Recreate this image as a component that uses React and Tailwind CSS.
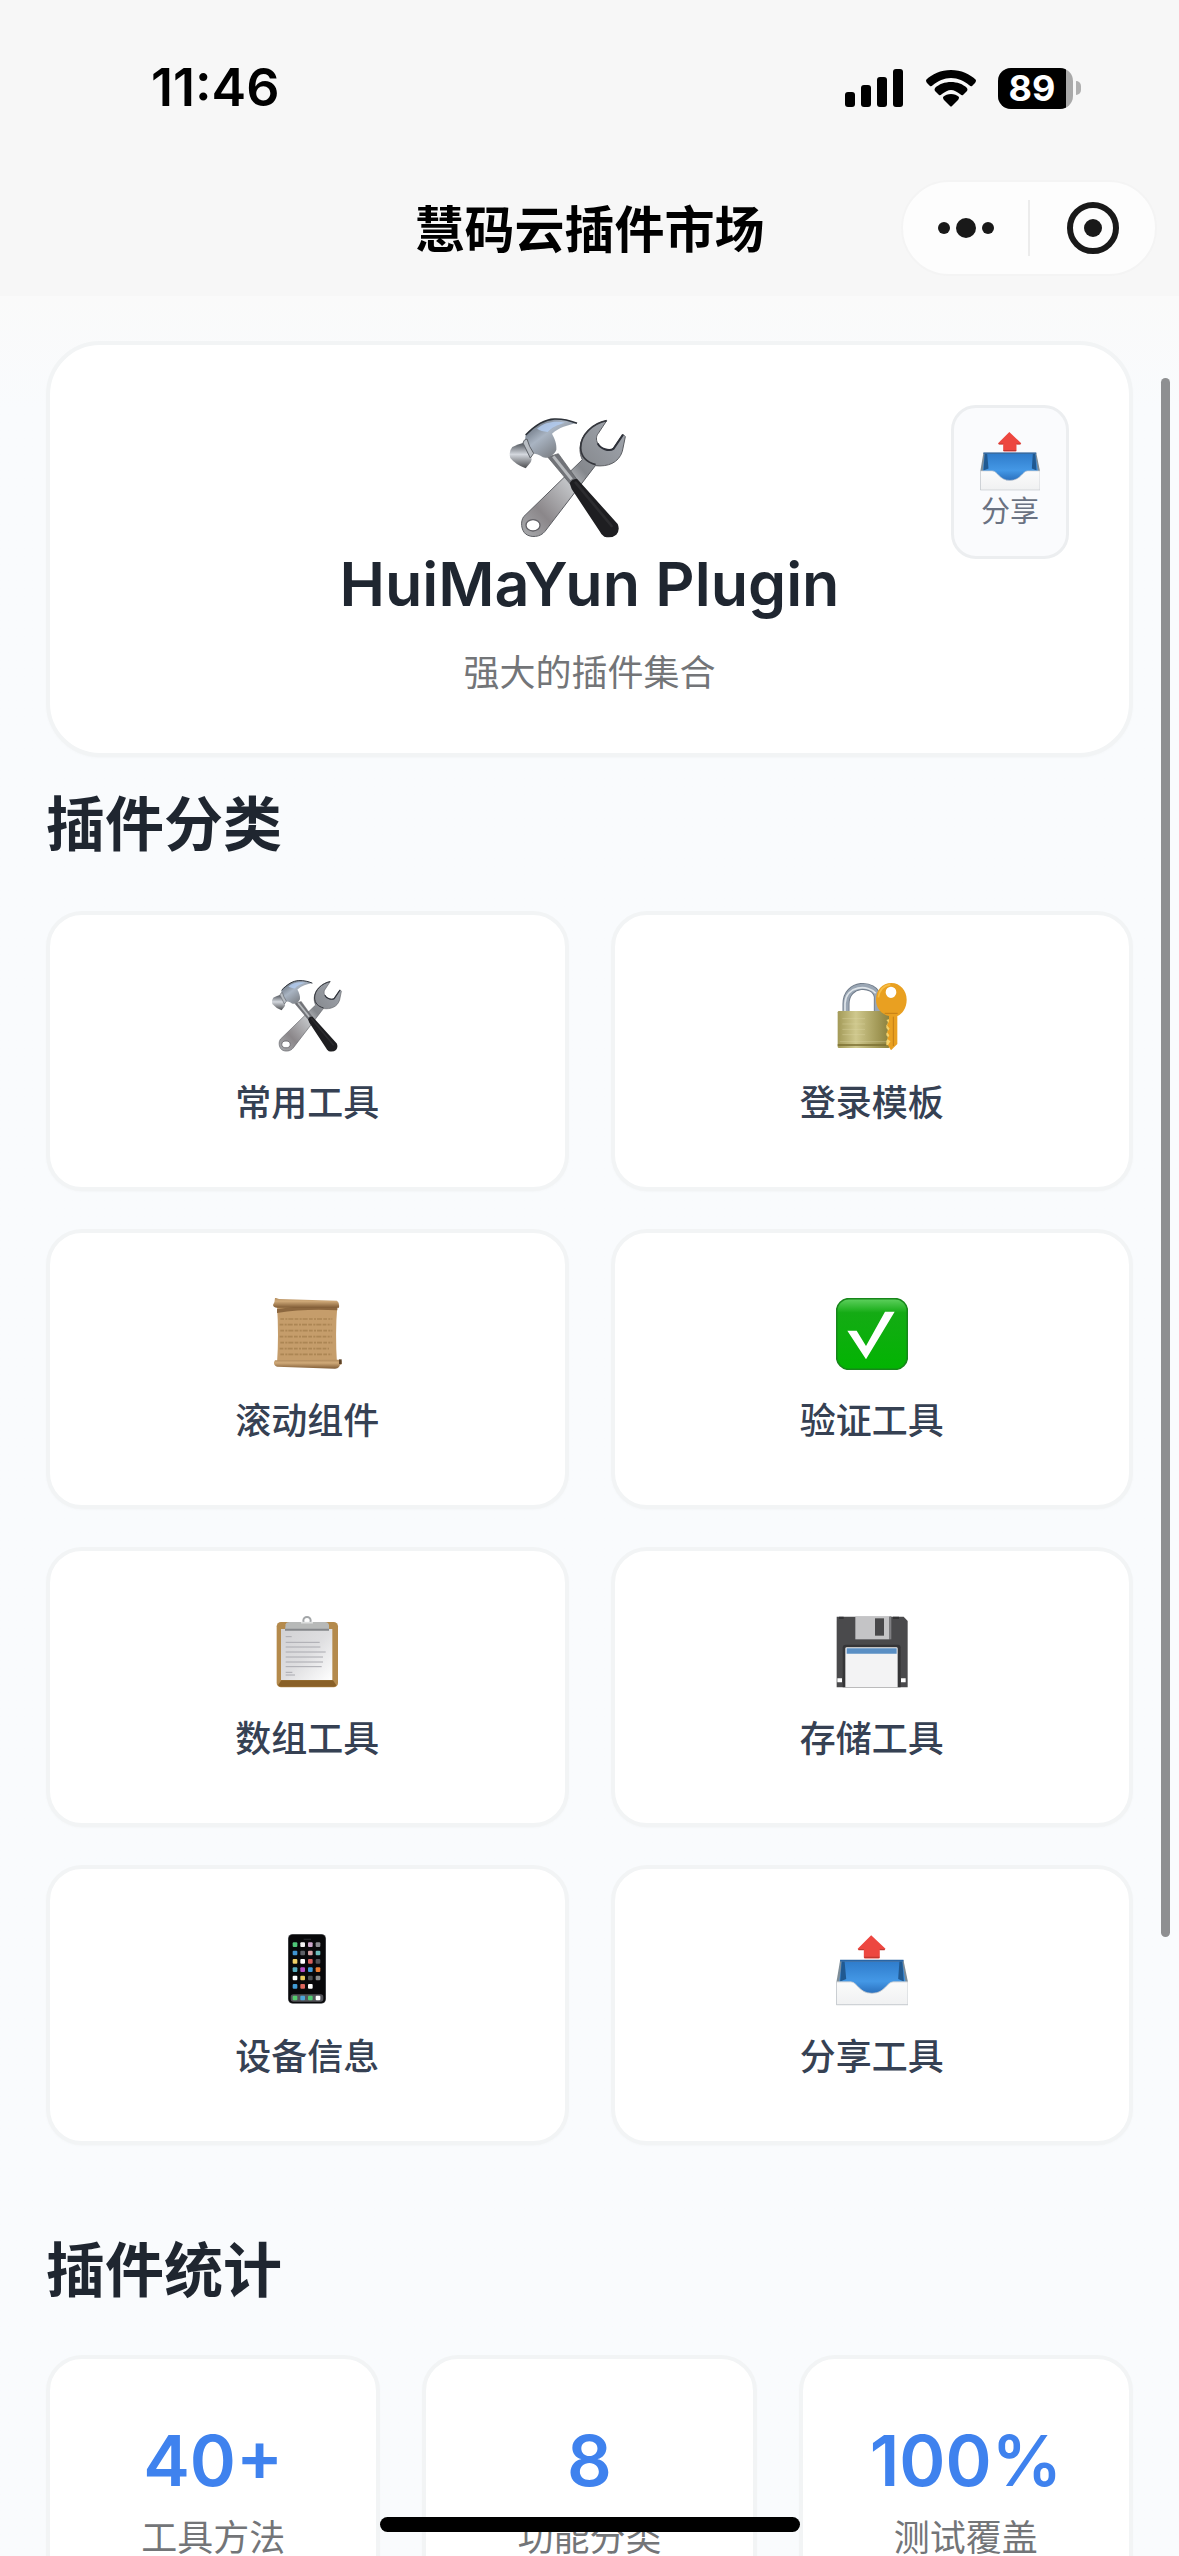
import React, { useId } from "react";

function ToolsIcon({ className }) {
  const id = useId();
  return (
    <svg viewBox="88 80 354 360" className={className} aria-hidden="true">
      <defs>
        <linearGradient id={id + "w"} x1="1" y1="0" x2="0" y2="1">
          <stop offset="0" stopColor="#a3a8b0" />
          <stop offset="0.42" stopColor="#85888d" />
          <stop offset="0.55" stopColor="#c0c2c5" />
          <stop offset="0.8" stopColor="#8b878a" />
          <stop offset="1" stopColor="#a9abae" />
        </linearGradient>
        <linearGradient id={id + "h"} x1="0" y1="0" x2="1" y2="1">
          <stop offset="0" stopColor="#4d5560" />
          <stop offset="0.4" stopColor="#a9b4c2" />
          <stop offset="0.75" stopColor="#7d8187" />
          <stop offset="1" stopColor="#4c4d50" />
        </linearGradient>
        <linearGradient id={id + "f"} x1="0" y1="0" x2="0" y2="1">
          <stop offset="0" stopColor="#4f545b" />
          <stop offset="0.45" stopColor="#d4d8de" />
          <stop offset="1" stopColor="#4a4b4e" />
        </linearGradient>
      </defs>
      <path d="M381 88C340 96 304 128 301 168C300 184 304 197 308 205L132 376C122 390 124 416 138 428C154 440 182 438 196 420L347 223C384 227 417 215 428 180L437 136L430 129L400 172C388 182 362 172 354 156C348 144 350 133 356 126Z" fill={"url(#" + id + "w)"} stroke="#5b5d62" strokeWidth="3" />
      <path d="M381 88C340 96 302 130 303 170C304 196 320 212 348 220" fill="none" stroke="#34363c" strokeWidth="5" />
      <path d="M430 130L402 172C388 182 362 172 354 156" fill="none" stroke="#2d3038" strokeWidth="6" />
      <ellipse cx="160" cy="402" rx="21" ry="17" fill="#fff" stroke="#626166" strokeWidth="4" />
      <path d="M204 197L236 187L290 262L270 276Z" fill="#717378" stroke="#55575b" strokeWidth="2" />
      <path d="M221 195L276 264" stroke="#b7babd" strokeWidth="9" />
      <path d="M270 276Q276 263 292 262L414 398Q422 416 410 430Q396 442 374 436Q364 430 360 420L276 293Z" fill="#1e1e21" />
      <path d="M288 274L396 404" stroke="#2c2c2f" strokeWidth="8" strokeLinecap="round" />
      <path d="M138 131C160 107 190 84 224 83C252 82 272 88 292 95C264 102 238 108 217 127C225 142 232 158 230 176C222 194 202 203 190 198C178 189 160 184 148 188L134 160Z" fill={"url(#" + id + "h)"} />
      <path d="M172 112C196 92 226 88 256 94C234 100 216 108 204 122C192 120 180 118 172 112Z" fill="#b3cdf3" opacity="0.8" />
      <path d="M138 131C166 102 194 84 224 83C252 82 272 88 292 96" fill="none" stroke="#2c3138" strokeWidth="5" />
      <path d="M98 167Q116 158 130 155L154 196Q158 206 152 214L138 231Q108 220 92 200Q86 180 98 167Z" fill={"url(#" + id + "f)"} />
      <path d="M130 155Q132 144 142 143Q148 166 162 186L152 200Z" fill="#b9bec4" stroke="#5c6066" strokeWidth="3" />
    </svg>
  );
}

function LockKeyIcon({ className }) {
  const id = useId();
  return (
    <svg viewBox="73 60 216 216" className={className} aria-hidden="true">
      <defs>
        <linearGradient id={id + "b"} x1="0" y1="0" x2="1" y2="0">
          <stop offset="0" stopColor="#a39a58" />
          <stop offset="0.35" stopColor="#cfc88d" />
          <stop offset="0.7" stopColor="#aaa160" />
          <stop offset="1" stopColor="#8b803c" />
        </linearGradient>
      </defs>
      <path d="M103 160V132C103 66 190 66 197 110V160" fill="none" stroke="#6f7a88" strokeWidth="21" />
      <path d="M103 160V132C103 66 190 66 197 110V160" fill="none" stroke="#9aa6b4" strokeWidth="16" />
      <path d="M100 160V130C103 76 170 72 192 100" fill="none" stroke="#dfe5ea" strokeWidth="5" />
      <rect x="78" y="153" width="156" height="111" rx="4" fill={"url(#" + id + "b)"} />
      <path d="M78 255H232" stroke="#7a6e30" strokeWidth="5" />
      <path d="M84 245H230M92 176H160M92 192H160M92 208H160M92 224H160" stroke="#ddd7a4" strokeWidth="2" opacity="0.6" />
      <path d="M224 180q9 8 0 16v8q9 8 0 16v6q9 8 0 16v14h12V176z" fill="#f7d36a" />
      <path fillRule="evenodd" d="M239 69C266 69 285 92 285 119C285 143 272 162 257 168V252L238 271L229 256L236 244L227 236L233 226L226 216L234 206L226 196L232 184V168C208 162 193 144 193 119C193 91 212 69 239 69ZM238 80A16 17 0 1 0 238 114A16 17 0 1 0 238 80Z" fill="#e9a021" />
      <path d="M245 170V258M219 160H258" stroke="#c47f16" strokeWidth="3" />
      <path d="M200 112C204 88 218 76 236 74" fill="none" stroke="#f7bd45" strokeWidth="5" />
    </svg>
  );
}

function ScrollIcon({ className }) {
  const id = useId();
  return (
    <svg viewBox="66 55 216 216" className={className} aria-hidden="true">
      <defs>
        <linearGradient id={id + "r"} x1="0" y1="0" x2="0" y2="1">
          <stop offset="0" stopColor="#b08a5c" />
          <stop offset="0.35" stopColor="#d0aa79" />
          <stop offset="1" stopColor="#805c36" />
        </linearGradient>
      </defs>
      <path d="M84 78H265Q258 160 264 252H84Q90 165 84 78Z" fill="#c59d6b" />
      <path d="M84 88Q170 74 265 82V92Q170 86 84 100Z" fill="#8c673f" />
      <path d="M94 118H250M92 135H248M94 153H250M92 171H248M94 189H250M92 207H240M94 224H248" stroke="#94703f" strokeWidth="5" strokeDasharray="11 4 6 3 15 4" opacity="0.5" />
      <path d="M78 54Q84 56 90 58L264 63Q272 68 270 84L84 84Q74 84 72 76Q78 68 78 54Z" fill={"url(#" + id + "r)"} />
      <path d="M78 242L270 240Q278 240 278 246V254Q272 254 270 262Q266 267 258 267L84 261Q74 258 75 248Z" fill={"url(#" + id + "r)"} />
      <path d="M270 239H278V253H270Z" fill="#5c4228" />
    </svg>
  );
}

function CheckIcon({ className }) {
  const id = useId();
  return (
    <svg viewBox="73 55 216 216" className={className} aria-hidden="true">
      <defs>
        <linearGradient id={id + "g"} x1="0" y1="0" x2="0" y2="1">
          <stop offset="0" stopColor="#5fd05f" />
          <stop offset="0.2" stopColor="#14ab14" />
          <stop offset="1" stopColor="#02b402" />
        </linearGradient>
      </defs>
      <rect x="75" y="57" width="212" height="212" rx="37" fill={"url(#" + id + "g)"} stroke="#17861a" strokeWidth="5" />
      <path d="M107 153H135L163 199L220 96H249L163 239Z" fill="#fff" />
    </svg>
  );
}

function ClipboardIcon({ className }) {
  const id = useId();
  return (
    <svg viewBox="66 49 216 216" className={className} aria-hidden="true">
      <defs>
        <linearGradient id={id + "p"} x1="0" y1="0" x2="1" y2="1">
          <stop offset="0" stopColor="#d2d2d4" />
          <stop offset="0.5" stopColor="#dedee0" />
          <stop offset="1" stopColor="#fff" />
        </linearGradient>
      </defs>
      <rect x="83" y="67" width="184" height="196" rx="13" fill="#b48a4c" />
      <path d="M97 242H252L262 257Q260 261 254 261H96Q90 261 87 257Z" fill="#896027" />
      <rect x="96" y="88" width="154" height="153" fill={"url(#" + id + "p)"} />
      <path d="M110 111H128M110 128H212M110 142H214M110 157H230M110 172H222M110 187H222M110 201H218M110 218H130M110 226H138" stroke="#aaaab0" strokeWidth="3" />
      <circle cx="174" cy="63" r="11" fill="none" stroke="#a3a6a8" strokeWidth="6" />
      <path d="M110 74Q112 67 122 67H228Q238 67 240 76V90H108Z" fill="#b7b9b8" />
      <path d="M108 90H240" stroke="#85878a" strokeWidth="6" />
      <path d="M156 69H192" stroke="#dcdede" strokeWidth="5" />
    </svg>
  );
}

function FloppyIcon({ className }) {
  return (
    <svg viewBox="73 49 216 216" className={className} aria-hidden="true">
      <path d="M75 51H276L288 64V263H75Z" fill="#4a4a4c" />
      <path d="M82 51H96V58H82ZM244 51H262V58H244Z" fill="#333335" />
      <rect x="131" y="50" width="102" height="69" fill="#c4c4c6" />
      <path d="M233 50H239V119H233Z" fill="#7f7f82" />
      <rect x="190" y="56" width="27" height="52" fill="#48484a" />
      <path d="M93 263V142Q94 135 102 135H260Q267 136 267 143V263Z" fill="#353537" />
      <path d="M101 263V147Q101 143 105 143H254Q258 143 258 147V263Z" fill="#f3f3f4" />
      <path d="M105 146H255V162H105Z" fill="#5a8fc4" />
      <path d="M77 236H91V248H77ZM268 236H282V248H268Z" fill="#fff" />
    </svg>
  );
}

const appRows = [
  ["#4fc878", "#f3f3f3", "#cda8cc", "#8c8c92"],
  ["#3f93d0", "#5d6066", "#d6a3a5", "#6cbcb9"],
  ["#f0d067", "#ffffff", "#d5605c", "#505055"],
  ["#58aebf", "#b54dc4", "#3f9ad8", "#ea7d33"],
  ["#ffffff", "#e6c85d", "#4c4e50", "#8a8a8a"],
  ["#419cd6", "#dc655c", "#ffffff"],
];

function PhoneIcon({ className }) {
  return (
    <svg viewBox="66 44 216 216" className={className} aria-hidden="true">
      <rect x="117" y="44" width="114" height="209" rx="14" fill="#56585c" />
      <rect x="119" y="46" width="110" height="205" rx="12" fill="#08080a" />
      <path d="M164 60H186" stroke="#252528" strokeWidth="4" />
      <rect x="125" y="225" width="98" height="22" rx="8" fill="#53545a" />
      {appRows.map((row, r) =>
        row.map((color, c) => (
          <rect key={r + "-" + c} x={131 + c * 23} y={69 + r * 25} width="14" height="14" rx="3" fill={color} />
        ))
      )}
      {["#56cc6d", "#4aa5da", "#4fca71", "#ffffff"].map((color, c) => (
        <rect key={c} x={131 + c * 23} y="229" width="14" height="14" rx="3" fill={color} />
      ))}
    </svg>
  );
}

function OutboxIcon({ className }) {
  const id = useId();
  return (
    <svg viewBox="180 152 176 176" className={className} aria-hidden="true">
      <defs>
        <linearGradient id={id + "b"} x1="0" y1="0" x2="0" y2="1">
          <stop offset="0" stopColor="#2f7ccb" />
          <stop offset="0.6" stopColor="#4498e6" />
          <stop offset="1" stopColor="#286cb9" />
        </linearGradient>
        <linearGradient id={id + "t"} x1="0" y1="0" x2="0" y2="1">
          <stop offset="0" stopColor="#fbfbfb" />
          <stop offset="1" stopColor="#f0f1f2" />
        </linearGradient>
      </defs>
      <path d="M190 216H345L356 270V325H181V270Z" fill="#7e8d98" />
      <path d="M194 219H342L350 270L300 300H236L188 270Z" fill={"url(#" + id + "b)"} />
      <path d="M194 219L190 268L205 262L201 219ZM342 219L346 268L332 262L335 219Z" fill="#205991" />
      <path d="M190 217H345" stroke="#2865a5" strokeWidth="4" />
      <path d="M181 269H216C232 269 236 297 268 297C300 297 304 269 320 269H356V325H181Z" fill={"url(#" + id + "t)"} stroke="#c5c9ce" strokeWidth="2" />
      <path d="M266 155L301 188Q300 191 296 191H287V209Q287 212 284 212H251Q248 212 248 209V191H237Q233 191 233 188Z" fill="#ed4740" />
      <path d="M249 209H286M235 190H248M287 190H299" stroke="#bf3831" strokeWidth="3" />
    </svg>
  );
}

const categories = [
  { label: "常用工具", Icon: ToolsIcon },
  { label: "登录模板", Icon: LockKeyIcon },
  { label: "滚动组件", Icon: ScrollIcon },
  { label: "验证工具", Icon: CheckIcon },
  { label: "数组工具", Icon: ClipboardIcon },
  { label: "存储工具", Icon: FloppyIcon },
  { label: "设备信息", Icon: PhoneIcon },
  { label: "分享工具", Icon: OutboxIcon },
];

const stats = [
  { value: "40+", label: "工具方法" },
  { value: "8", label: "功能分类" },
  { value: "100%", label: "测试覆盖" },
];

function StatusBar() {
  return (
    <div className="flex h-44 items-center justify-between pr-[98px] pl-[151px]">
      <time className="text-[52px] leading-[60px] font-semibold">11:46</time>
      <div className="flex items-center gap-[22px]">
        <svg width="59" height="38" viewBox="0 0 59 38" role="img" aria-label="信号">
          <rect x="0" y="23" width="10" height="15" rx="3" />
          <rect x="16" y="16" width="10" height="22" rx="3" />
          <rect x="32" y="8" width="10" height="30" rx="3" />
          <rect x="48" y="0" width="10" height="38" rx="3" />
        </svg>
        <svg width="50" height="37" viewBox="0 0 50 37" role="img" aria-label="无线网络">
          <path d="M25 0C35 0 44 4 50 10Q50 12 49 13L46 16Q45 17 43 15C38 11 32 8 25 8S12 11 7 15Q5 17 4 16L1 13Q0 12 0 10C6 4 15 0 25 0Z" />
          <path d="M25 12C31 12 37 14 41 18Q42 20 41 21L37 25Q36 26 34 24C31 22 28 20 25 20S19 22 16 24Q14 26 13 25L9 21Q8 20 9 18C13 14 19 12 25 12Z" />
          <path d="M25 24C28 24 31 25 33 27Q33 29 32 30L26 36Q25 37 24 36L18 30Q17 29 17 27C19 25 22 24 25 24Z" />
        </svg>
        <div className="flex items-center gap-[3px]" role="img" aria-label="电量 89%">
          <div className="overflow-hidden rounded-[13px] bg-[#a9a9a9] pr-[7px]">
            <div className="flex h-[41px] w-[68px] items-center justify-center bg-black text-[36px] leading-none font-bold text-white">89</div>
          </div>
          <div className="h-[14px] w-[5px] rounded-r-full bg-[#b0b0b0]" />
        </div>
      </div>
    </div>
  );
}

function NavBar() {
  return (
    <div className="grid h-[120px] grid-cols-[1fr_auto_1fr] items-start pt-1 pr-[22px] pl-[22px]">
      <div />
      <h1 className="flex h-[100px] items-center text-[50px] leading-[60px] font-bold text-black">慧码云插件市场</h1>
      <div className="flex h-24 w-64 items-center justify-self-end rounded-full border-2 border-[#f4f4f4] bg-[#fdfdfd]">
        <button type="button" aria-label="更多" className="flex flex-1 items-center justify-center">
          <svg width="58" height="20" viewBox="0 0 58 20" fill="#191919">
            <circle cx="7" cy="10" r="6" />
            <circle cx="29" cy="10" r="10" />
            <circle cx="51" cy="10" r="6" />
          </svg>
        </button>
        <div className="h-14 w-[2px] bg-[#ececec]" />
        <button type="button" aria-label="关闭" className="flex flex-1 items-center justify-center">
          <svg width="52" height="52" viewBox="0 0 52 52" fill="#191919">
            <circle cx="26" cy="26" r="23" fill="none" stroke="#191919" strokeWidth="6" />
            <circle cx="26" cy="26" r="9" />
          </svg>
        </button>
      </div>
    </div>
  );
}

export default function App() {
  return (
    <div className="relative flex h-screen flex-col overflow-hidden bg-[#f9fbfd] font-['Inter','Noto_Sans_CJK_SC',sans-serif] text-[#1f2630]">
      <header className="shrink-0 bg-[#f7f7f7] text-black">
        <StatusBar />
        <NavBar />
      </header>

      <main className="min-h-0 flex-1 overflow-hidden bg-linear-to-b from-[#fafafa] to-[#f9fbfd] to-5% px-[46px] pt-[45px]">
        <section className="relative flex flex-col items-center rounded-[54px] border-4 border-[#f2f4f5] bg-white pt-[73px] pb-[53px] shadow-sm shadow-black/2">
          <div className="pr-[44px]">
            <ToolsIcon className="h-[120px] w-[118px]" />
          </div>
          <h2 className="mt-2 text-[61px] leading-[76px] font-semibold">HuiMaYun Plugin</h2>
          <p className="mt-6 text-[36px] leading-[54px] text-[#737578]">强大的插件集合</p>
          <button type="button" className="absolute top-[60px] right-[60px] flex h-[154px] w-[118px] flex-col items-center justify-center rounded-[25px] border-[3px] border-[#eceef0] bg-[#fafbfd]">
            <OutboxIcon className="size-[60px]" />
            <span className="text-[29px] leading-[42px] text-gray-500">分享</span>
          </button>
        </section>

        <section>
          <h2 className="mt-[26px] mb-11 text-[59px] leading-[84px] font-bold">插件分类</h2>
          <div className="grid grid-cols-2 gap-x-[42px] gap-y-[38px]">
            {categories.map(({ label, Icon }) => (
              <button key={label} type="button" className="flex h-[280px] flex-col items-center rounded-[36px] border-4 border-[#f2f4f5] bg-white pt-[65px] shadow-sm shadow-black/2">
                <Icon className="size-[72px]" />
                <span className="mt-6 text-[36px] leading-[54px] font-medium text-gray-700">{label}</span>
              </button>
            ))}
          </div>
        </section>

        <section>
          <h2 className="mt-[84px] mb-[42px] text-[59px] leading-[84px] font-bold">插件统计</h2>
          <div className="grid grid-cols-3 gap-[42px]">
            {stats.map(({ value, label }) => (
              <div key={label} className="flex flex-col items-center rounded-[36px] border-4 border-[#f2f4f5] bg-white pt-[60px] pb-[54px] shadow-sm shadow-black/2">
                <strong className="text-[70px] leading-[84px] font-semibold text-[#3f82ee]">{value}</strong>
                <span className="mt-2 text-[36px] leading-[54px] text-[#737578]">{label}</span>
              </div>
            ))}
          </div>
        </section>
      </main>

      <div className="absolute top-[378px] right-[9px] h-[1559px] w-[9px] rounded-full bg-[#8e8f91]" />
      <div className="absolute inset-x-0 bottom-6 mx-auto h-[15px] w-[420px] rounded-full bg-black" />
    </div>
  );
}
